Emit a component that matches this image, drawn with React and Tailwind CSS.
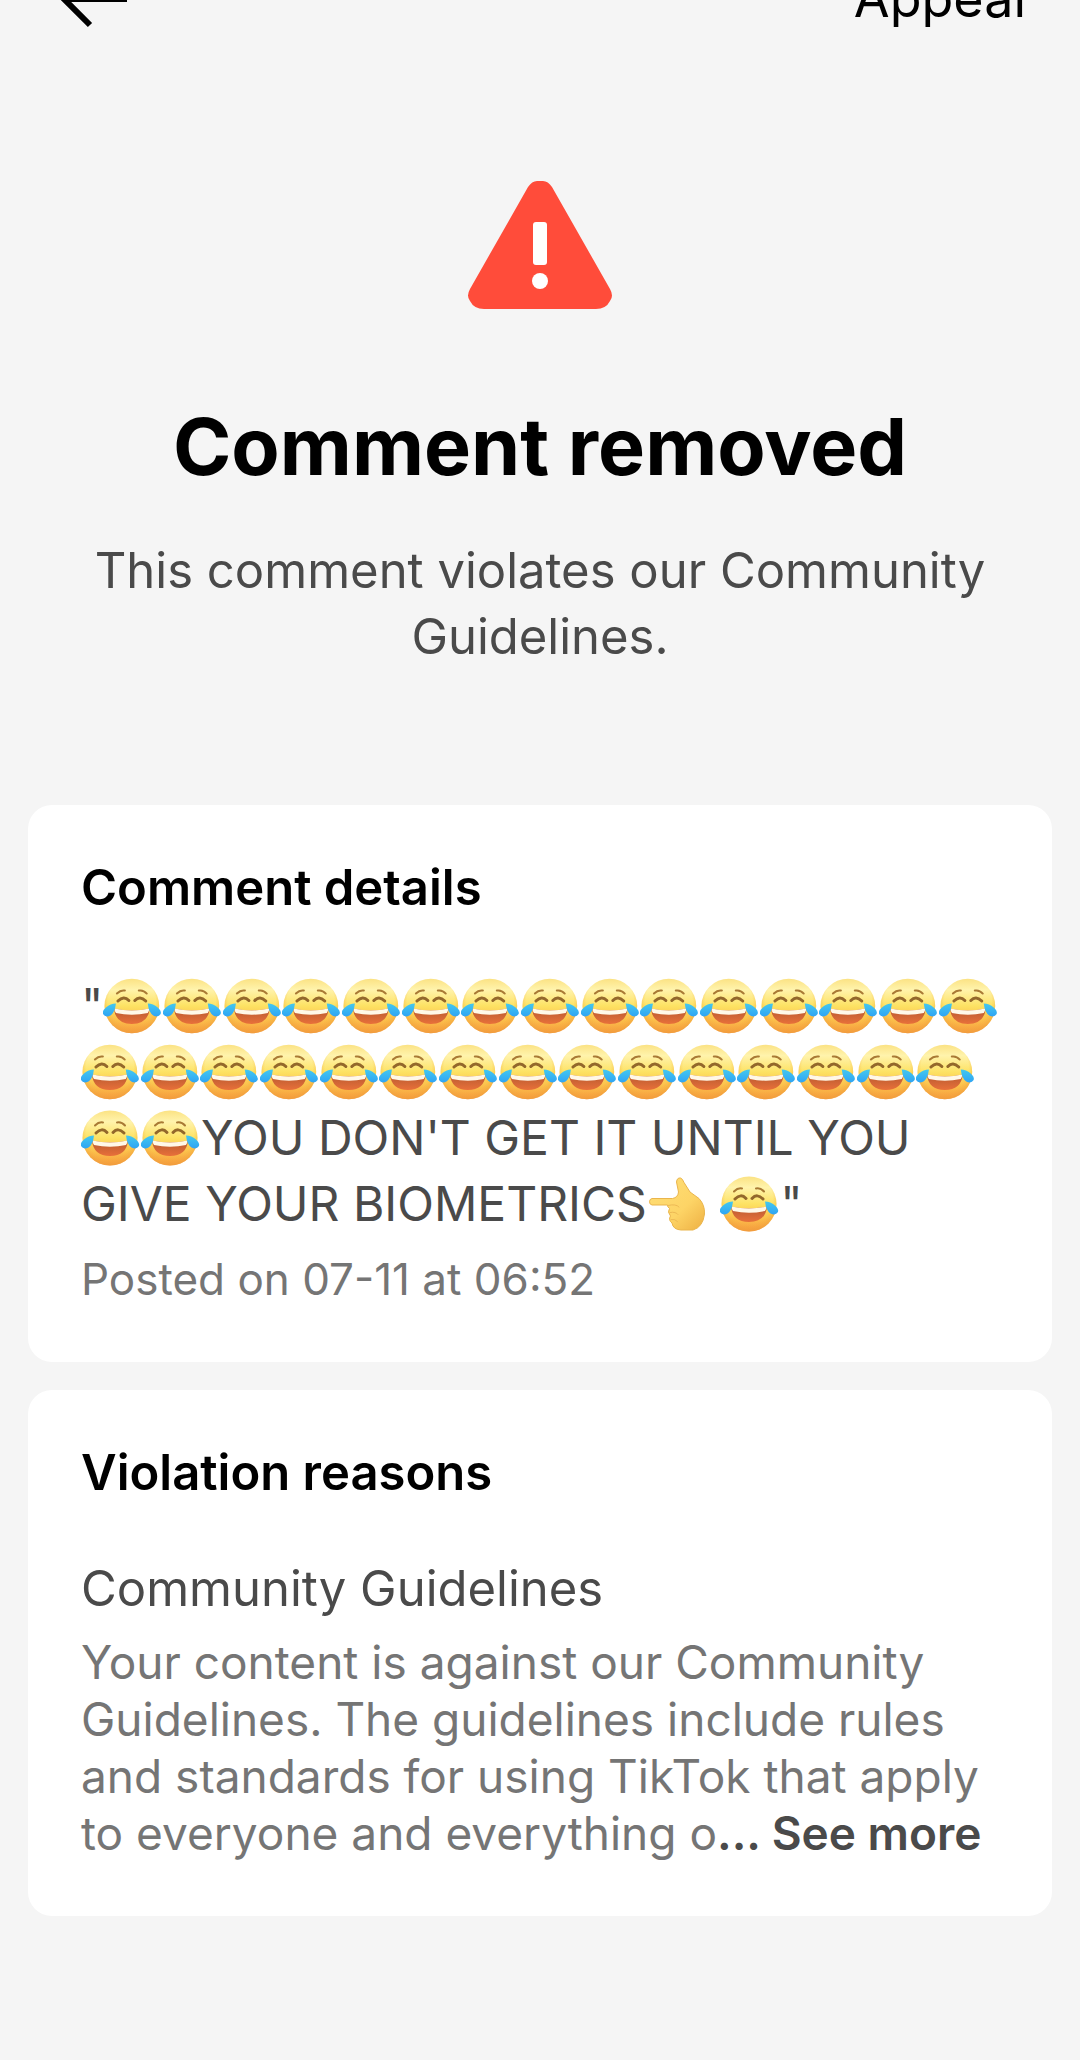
import React from 'react';

const APPEAL_FONT = "font-['Inter','Liberation_Sans',sans-serif]";

// Shared gradients and shapes, referenced by every emoji on the page
function EmojiDefs() {
  return (
    <svg className="absolute w-0 h-0" aria-hidden="true">
      <defs>
        <linearGradient id="face" x1="0" y1="0" x2="0" y2="1">
          <stop offset="0" stopColor="#fbe283" />
          <stop offset="0.2" stopColor="#fff3ac" />
          <stop offset="0.5" stopColor="#fde263" />
          <stop offset="0.75" stopColor="#fbc04b" />
          <stop offset="1" stopColor="#f79a3e" />
        </linearGradient>
        <radialGradient id="rim" cx="0.5" cy="0.42" r="0.58">
          <stop offset="0.75" stopColor="#f5a93c" stopOpacity="0" />
          <stop offset="1" stopColor="#ee9d3c" stopOpacity="0.65" />
        </radialGradient>
        <linearGradient id="mouth" x1="0" y1="0" x2="0" y2="1">
          <stop offset="0" stopColor="#b75a30" />
          <stop offset="1" stopColor="#e8703a" />
        </linearGradient>
        <linearGradient id="tear" x1="0" y1="0" x2="0" y2="1">
          <stop offset="0" stopColor="#43c8ee" />
          <stop offset="1" stopColor="#2fa4f4" />
        </linearGradient>
        <linearGradient id="hand" x1="0" y1="0" x2="1" y2="1">
          <stop offset="0" stopColor="#ffdf77" />
          <stop offset="0.6" stopColor="#fdd466" />
          <stop offset="1" stopColor="#eeb043" />
        </linearGradient>
        <symbol id="joy" viewBox="0 0 60 60">
          <circle cx="29" cy="30" r="27.5" fill="url(#face)" />
          <circle cx="29" cy="30" r="27.5" fill="url(#rim)" />
          <path d="M14 17.500q4-4 8-3M36 14.500q4.500-1 8 3" fill="none" stroke="#a97a35" strokeWidth="2" strokeLinecap="round" />
          <path d="M15 25q6-6 11-0.500M32 24.500q5-5.500 11 0.500" fill="none" stroke="#93682b" strokeWidth="3" strokeLinecap="round" />
          <path d="M11 32.500q18 4 36 0q-1.500 15.500-18 15.500q-16.500 0-18-15.500z" fill="url(#mouth)" />
          <path d="M11.500 32.500q17.500 4 35 0q0 2.500-1.500 4.500q-16 3.500-32 0q-1.500-2-1.500-4.500z" fill="#fff8e8" />
          <path d="M13 27.500q-5.500 0-10 4q-4 3.500-3 6.500q2.500 4 7.500 1.500q4.500-3 5.500-12z" fill="url(#tear)" />
          <path d="M45 27.500q5.500 0 10 4q4 3.500 3 6.500q-2.500 4-7.500 1.500q-4.500-3-5.500-12z" fill="url(#tear)" />
        </symbol>
        <symbol id="point-left" viewBox="0 0 60 60">
          <path
            d="M5 24.500H25.500Q31 23.500 31.500 18L29.500 8Q30 3.500 33.500 4Q35.500 4.500 37 8.500L43 18L52 24.500Q58 31 57.500 40Q56 53 46 56H34Q26 55.500 25 49Q21 46 23.500 42Q20 38 22.500 34.500Q20 32.500 20.500 31L5 31Q2.500 30.500 2.500 27.800Q2.500 25 5 24.500Z"
            fill="url(#hand)"
            stroke="#eab54c"
            strokeWidth="1"
          />
          <path d="M21 31.500Q29 29.500 32 33M23 38.500Q29 37.500 31 40.500M24 45.500Q28 44.500 30.500 47.500" fill="none" stroke="#edba55" strokeWidth="1" strokeLinecap="round" />
        </symbol>
      </defs>
    </svg>
  );
}

function Joy() {
  return (
    <svg className="w-[60px] h-[60px] shrink min-w-0" viewBox="0 0 60 60" role="img" aria-label="face with tears of joy">
      <use href="#joy" />
    </svg>
  );
}

function JoyRow({ count }) {
  return (
    <span className="flex items-center w-[895px]">
      {Array.from({ length: count }, (_, i) => (
        <Joy key={i} />
      ))}
    </span>
  );
}

function PointLeft() {
  return (
    <svg className="w-[60px] h-[60px] shrink-0" role="img" aria-label="hand pointing left">
      <use href="#point-left" />
    </svg>
  );
}

function WarningIcon() {
  return (
    <svg className="w-[146px] h-[130px]" viewBox="0 0 146 130" aria-hidden="true">
      <path
        d="M61 7Q65 1 70 1H76Q81 1 85 7L143 109Q147 116 143 121Q139 129 129 129H17Q7 129 3 121Q-1 116 3 109Z"
        fill="#ff4c3a"
      />
      <rect x="66" y="42" width="14" height="43" rx="3" fill="#fff" />
      <circle cx="73" cy="101" r="8" fill="#fff" />
    </svg>
  );
}

function Card({ title, children }) {
  return (
    <section className="bg-white rounded-3xl pl-[53px] pr-[54px] pt-[50px] pb-[54px]">
      <h2 className="text-[49px] leading-[66px] font-semibold text-black">{title}</h2>
      {children}
    </section>
  );
}

export default function App() {
  return (
    <div className={`min-h-screen overflow-hidden bg-[#f5f5f5] ${APPEAL_FONT}`}>
      <EmojiDefs />

      {/* Header, scrolled halfway out of view */}
      <header className="-mt-[46px] h-[90px] flex items-center justify-between pl-[60px] pr-[54px]">
        <button type="button" aria-label="Back">
          <svg className="w-[70px] h-[60px]" viewBox="0 0 70 60" fill="none" stroke="#000" strokeWidth="6">
            <path d="M30 4L4 30L30 56M4 30H67" />
          </svg>
        </button>
        <button type="button" className="text-[52px] leading-[66px] text-black">
          Appeal
        </button>
      </header>

      {/* Status */}
      <div className="flex flex-col items-center pt-[136px] px-[54px] text-center">
        <WarningIcon />
        <h1 className="mt-[86px] text-[79px] leading-[100px] font-bold text-black whitespace-nowrap">Comment removed</h1>
        <p className="mt-[42px] text-[49px] leading-[66px] text-[#4a4a4a]">
          This comment violates our Community Guidelines.
        </p>
      </div>

      <main className="mt-[135px] px-7 pb-[145px] flex flex-col gap-7">
        <Card title="Comment details">
          <div className="mt-[52px] text-[48px] leading-[66px] text-[#4a4a4a] whitespace-nowrap">
            <div className="flex items-center h-[66px]">"<JoyRow count={15} /></div>
            <div className="flex items-center h-[66px]"><JoyRow count={15} /></div>
            <div className="flex items-center h-[66px]"><Joy /><Joy />YOU DON'T GET IT UNTIL YOU</div>
            <div className="flex items-center h-[66px]">GIVE YOUR BIOMETRICS<PointLeft />{'\u00a0'}<Joy />"</div>
          </div>
          <p className="mt-[13px] text-[44px] leading-[58px] text-[#757575]">Posted on 07-11 at 06:52</p>
        </Card>

        <Card title="Violation reasons">
          <h3 className="mt-[50px] text-[49px] leading-[66px] text-[#4a4a4a]">Community Guidelines</h3>
          <p className="mt-[12px] text-[46px] leading-[57px] text-[#757575] whitespace-nowrap">
            Your content is against our Community<br />
            Guidelines. The guidelines include rules<br />
            and standards for using TikTok that apply<br />
            to everyone and everything o
            <button type="button" className="font-semibold text-[#4a4a4a]">... See more</button>
          </p>
        </Card>
      </main>
    </div>
  );
}
